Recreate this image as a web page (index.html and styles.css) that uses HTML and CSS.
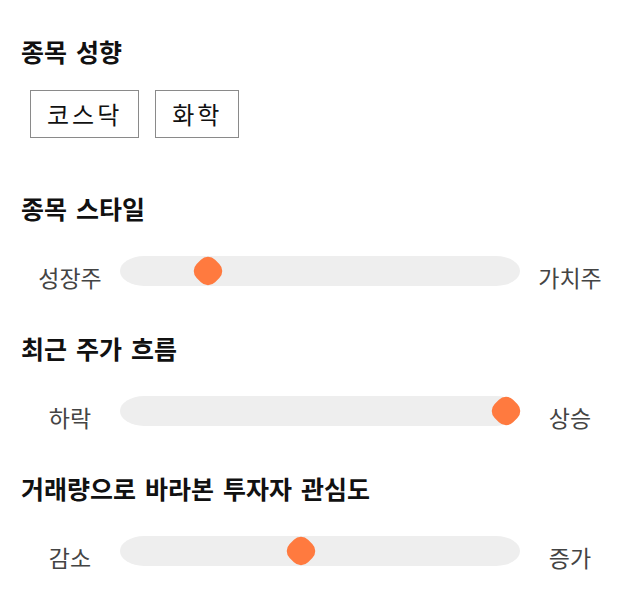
FILE: index.html
```html
<!DOCTYPE html>
<html lang="ko">
<head>
<meta charset="utf-8">
<link rel="stylesheet" href="styles.css">
</head>
<body>
<div class="page">
  <section class="sec sec-first">
    <h2 class="title">종목 성향</h2>
    <div class="tags">
      <span class="tag">코스닥</span>
      <span class="tag">화학</span>
    </div>
  </section>
  <section class="sec">
    <h2 class="title">종목 스타일</h2>
    <div class="slider-row">
      <span class="label">성장주</span>
      <div class="track"><span class="thumb" style="left: calc((100% - 28px) * 0.2)"></span></div>
      <span class="label">가치주</span>
    </div>
  </section>
  <section class="sec">
    <h2 class="title">최근 주가 흐름</h2>
    <div class="slider-row">
      <span class="label">하락</span>
      <div class="track"><span class="thumb" style="left: calc((100% - 28px) * 1)"></span></div>
      <span class="label">상승</span>
    </div>
  </section>
  <section class="sec">
    <h2 class="title">거래량으로 바라본 투자자 관심도</h2>
    <div class="slider-row">
      <span class="label">감소</span>
      <div class="track"><span class="thumb" style="left: calc((100% - 28px) * 0.45)"></span></div>
      <span class="label">증가</span>
    </div>
  </section>
</div>
</body>
</html>
```
FILE: styles.css
```css
html, body {
  margin: 0;
  padding: 0;
  background: #fff;
}
.page {
  display: flex;
  flex-direction: column;
  padding: 34px 20px 0 20px;
  font-family: "Noto Sans CJK KR", "Noto Sans", sans-serif;
  color: #111;
}
.sec {
  margin-top: 39px;
}
.sec-first {
  margin-top: 0;
  margin-bottom: 14px;
}
.title {
  margin: 0 0 0 1px;
  font-size: 25px;
  word-spacing: 2px;
  line-height: 34px;
  font-weight: 700;
  color: #111;
}
.tags {
  display: flex;
  gap: 16px;
  margin: 22px 0 0 10px;
}
.tag {
  box-sizing: border-box;
  height: 48px;
  padding: 0 16px;
  border: 1px solid #8a8a8a;
  font-size: 24px;
  letter-spacing: 3px;
  line-height: 46px;
  color: #111;
}
.slider-row {
  display: flex;
  align-items: flex-start;
  margin-top: 31px;
}
.label {
  width: 100px;
  padding-top: 6px;
  text-align: center;
  font-size: 23px;
  line-height: 30px;
  color: #444;
}
.track {
  position: relative;
  flex: 1;
  height: 30px;
  background: #eeeeee;
  border-radius: 24px / 15px;
}
.thumb {
  position: absolute;
  top: 1px;
  width: 28px;
  height: 28px;
}
.thumb::before {
  content: "";
  position: absolute;
  left: 1px;
  top: 1px;
  width: 26px;
  height: 26px;
  background: #ff7a3f;
  border-radius: 10px;
  transform: rotate(45deg);
}
```
